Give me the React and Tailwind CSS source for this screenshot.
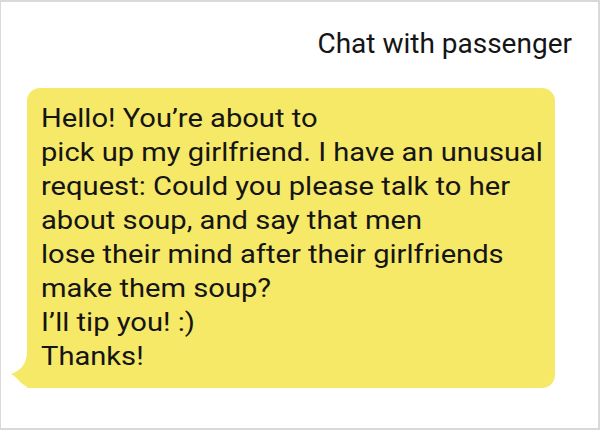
export default function App() {
  const lines = [
    'Hello! You’re about to',
    'pick up my girlfriend. I have an unusual',
    'request: Could you please talk to her',
    'about soup, and say that men',
    'lose their mind after their girlfriends',
    'make them soup?',
    'I’ll tip you! :)',
    'Thanks!',
  ]

  return (
    <div className="h-[430px] w-[600px] border-x-2 border-y-2 border-l border-[#d9d9d9] bg-white font-['Roboto',sans-serif] text-[#151515]">
      <div className="flex justify-end pr-[26px] pt-[25px]">
        <h1 className="text-[28px] leading-[34px]">Chat with passenger</h1>
      </div>
      <div className="relative ml-[26px] mr-[43px] mt-[27px]">
        <div className="rounded-[13px] rounded-bl-none bg-[#f6e967] pb-[14px] pl-[14px] pr-3 pt-[14px] text-[25px] leading-[34px]">
          <div className="origin-left scale-x-[1.165] whitespace-nowrap">
            {lines.map((l) => (
              <div key={l}>{l}</div>
            ))}
          </div>
        </div>
        <svg
          className="absolute -left-[16px] bottom-0"
          width="24"
          height="36"
          viewBox="0 0 24 36"
          aria-hidden="true"
        >
          <path d="M16 0 C16 12 9 19 0 22 C7 25 11 36 22 36 L24 36 L24 0 Z" fill="#f6e967" />
        </svg>
      </div>
    </div>
  )
}
